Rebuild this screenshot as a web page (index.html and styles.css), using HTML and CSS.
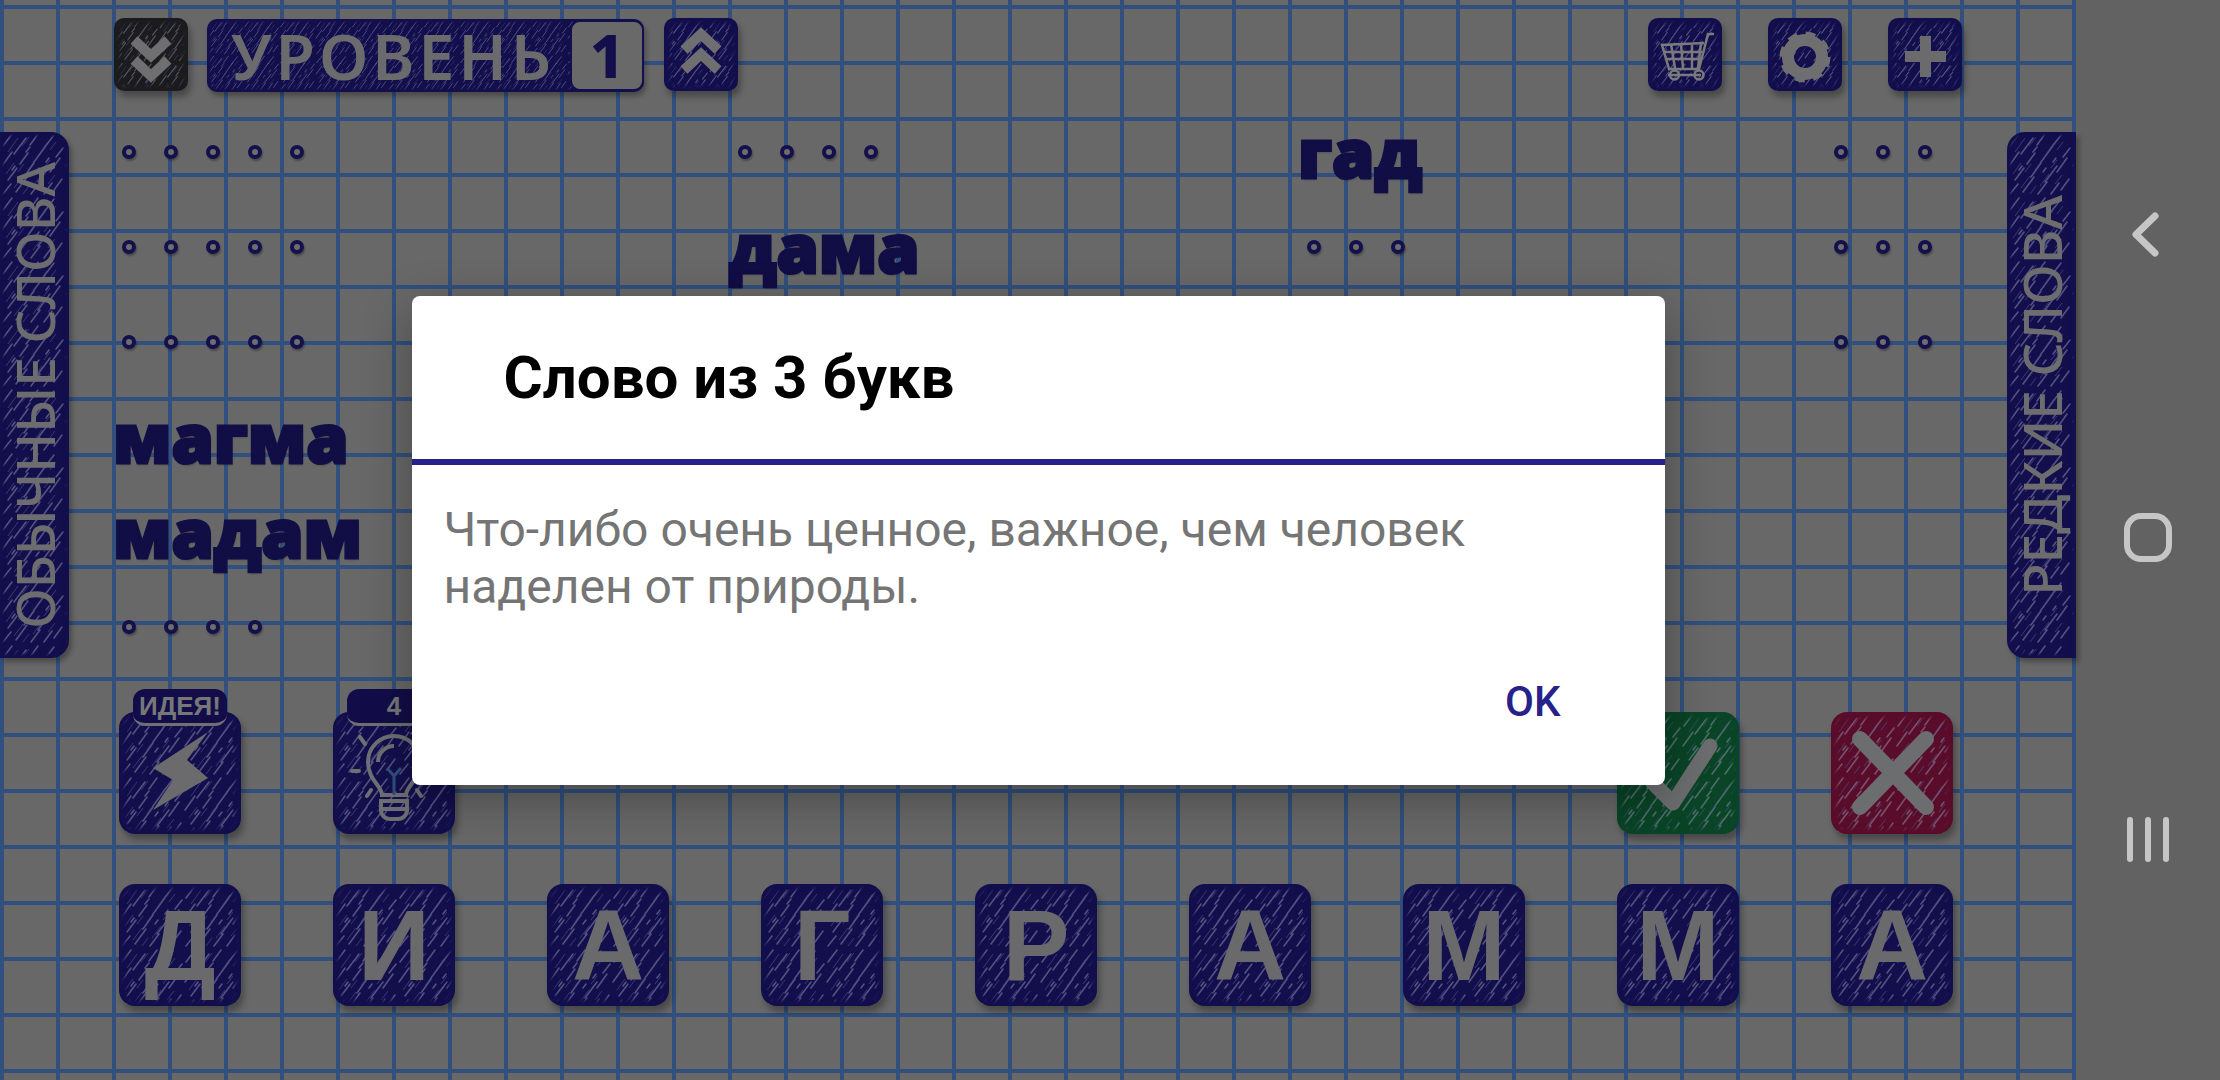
FILE: index.html
```html
<!DOCTYPE html>
<html lang="ru">
  <head>
    <meta charset="UTF-8" />
    <meta name="viewport" content="width=device-width, initial-scale=1.0" />
    <title>Слова из слова</title>
    <link rel="stylesheet" href="styles.css">
  </head>
  <body>
    <div class="screen">
      <div class="game">
        <div class="top-bar">
          <div class="tool-btn ink ink-black">
            <svg viewBox="0 0 74 73"><path class="glyph-line" d="M20 22l17 16 17-16M20 42l17 16 17-16" /></svg>
          </div>
          <div class="level ink">
            <span class="level-label">УРОВЕНЬ</span>
            <span class="level-num">1</span>
          </div>
          <div class="tool-btn ink">
            <svg viewBox="0 0 74 73"><path class="glyph-line" d="M20 32l17-16 17 16M20 52l17-16 17 16" /></svg>
          </div>
          <div class="top-right">
            <div class="tool-btn ink">
              <svg viewBox="0 0 74 73">
                <path class="cart" d="M66 16h-6l-9 35H21l-7-24 42-2M16 34h38M18 41h34M23 26l4 24M33 26l2 24M44 25v25M53 25l-3 25M20 57h33" />
                <circle class="cart" cx="26.5" cy="57" r="4.5" />
                <circle class="cart" cx="51" cy="57" r="4.5" />
              </svg>
            </div>
            <div class="tool-btn ink">
              <svg viewBox="0 0 74 73">
                <circle class="gear-body" cx="37" cy="39" r="17" />
                <circle class="gear-teeth" cx="37" cy="39" r="22" />
              </svg>
            </div>
            <div class="tool-btn ink">
              <svg viewBox="0 0 74 73"><path class="glyph-fill" d="M32 18h11v15h15v11H43v15H32V44H17V33h15z" /></svg>
            </div>
          </div>
        </div>

        <div class="board">
          <div class="side-tab side-left ink"><span>ОБЫЧНЫЕ СЛОВА</span></div>
          <div class="words">
            <div class="word-col">
              <div class="row"><i></i><i></i><i></i><i></i><i></i></div>
              <div class="row"><i></i><i></i><i></i><i></i><i></i></div>
              <div class="row"><i></i><i></i><i></i><i></i><i></i></div>
              <div class="row"><b>магма</b></div>
              <div class="row"><b>мадам</b></div>
              <div class="row"><i></i><i></i><i></i><i></i></div>
            </div>
            <div class="word-col">
              <div class="row"><i></i><i></i><i></i><i></i></div>
              <div class="row"><b>дама</b></div>
            </div>
            <div class="word-col">
              <div class="row"><b>гад</b></div>
              <div class="row"><i></i><i></i><i></i></div>
            </div>
            <div class="word-col">
              <div class="row"><i></i><i></i><i></i></div>
              <div class="row"><i></i><i></i><i></i></div>
              <div class="row"><i></i><i></i><i></i></div>
            </div>
          </div>
          <div class="side-tab side-right ink"><span>РЕДКИЕ СЛОВА</span></div>
        </div>

        <div class="keys">
          <div class="key ink">
            <span class="badge">ИДЕЯ!</span>
            <svg viewBox="0 0 122 122"><path class="glyph-fill" d="M89 20L68 48l21 18-55 32 20-30-20-12z" /></svg>
          </div>
          <div class="key ink">
            <span class="badge">4</span>
            <svg viewBox="0 0 122 122">
              <path class="bulb" d="M49 83c0-9-14-15-14-33a26 26 0 0 1 52 0c0 18-14 24-14 33zM48 89h26v9a9 9 0 0 1-9 9h-8a9 9 0 0 1-9-9zM48 97h26M45 50a16 16 0 0 1 16-16" />
              <path class="bulb-wire" d="M54 56l7 8 7-8M61 64v19" />
              <path class="bulb-ray" d="M27 25l5 7M19 59h7M96 59h7M34 84l4-6M88 84l-4-6" />
            </svg>
          </div>
          <div class="key-gap"></div>
          <div class="key-gap"></div>
          <div class="key-gap"></div>
          <div class="key-gap"></div>
          <div class="key-gap"></div>
          <div class="key ink ink-green">
            <svg viewBox="0 0 122 122"><path class="mark" d="M36 71l20 20 37-57" /></svg>
          </div>
          <div class="key ink ink-red">
            <svg viewBox="0 0 122 122"><path class="mark mark-x" d="M29 27l66 68M95 27L29 95" /></svg>
          </div>
        </div>

        <div class="keys letters">
          <div class="key ink">Д</div>
          <div class="key ink">И</div>
          <div class="key ink">А</div>
          <div class="key ink">Г</div>
          <div class="key ink">Р</div>
          <div class="key ink">А</div>
          <div class="key ink">М</div>
          <div class="key ink">М</div>
          <div class="key ink">А</div>
        </div>

        <div class="scrim">
          <div class="dialog">
            <div class="dialog-title">Слово из 3 букв</div>
            <div class="dialog-text">Что-либо очень ценное, важное, чем человек наделен от природы.</div>
            <div class="dialog-actions"><span>OK</span></div>
          </div>
        </div>
      </div>

      <div class="navbar">
        <svg class="nav-back" viewBox="0 0 27 45"><path d="M23 4L4 22.500 23 41" /></svg>
        <div class="nav-home"></div>
        <div class="nav-recent"><i></i><i></i><i></i></div>
      </div>
    </div>
  </body>
</html>
```

FILE: styles.css
```css
* {
  box-sizing: border-box;
}
body {
  margin: 0;
  overflow: hidden;
  background-color: #626262;
  font-family: "Liberation Sans", Arial, sans-serif;
}
.screen {
  display: flex;
  width: 2220px;
  height: 1080px;
}
.game {
  position: relative;
  width: 2076px;
  height: 1080px;
  background-color: #686868;
  background-image: linear-gradient(90deg, #31507d 4px, transparent 4px),
    linear-gradient(#31507d 4px, transparent 4px);
  background-size: 56px 56px;
  background-position: 0 5px;
}

/* scribbled ink used on every button */
.ink {
  --base: #130f4d;
  background-color: var(--base);
  background-image: url("data:image/svg+xml,%3Csvg xmlns='http://www.w3.org/2000/svg' width='64' height='64'%3E%3Cg stroke='rgb(150,152,180)' stroke-width='1.5' stroke-linecap='round' opacity='.5' fill='none'%3E%3Cpath d='M3 14l9-12M14 22l12-16M30 13l8-11M44 16l10-13M56 25l7-9M2 34l10-14M20 32l8-11M34 30l11-15M50 40l10-14M8 48l9-12M24 45l10-14M38 50l12-16M54 58l8-11M3 62l8-10M16 60l11-15M31 62l9-12M44 62l8-11M26 20l4-5M46 30l3-4M12 38l3-4M36 40l3-4'/%3E%3C/g%3E%3Cg stroke='rgb(70,75,130)' stroke-width='1' opacity='.7' fill='none'%3E%3Cpath d='M8 20l10-14M22 14l7-9M38 24l9-13M50 18l6-8M6 42l8-11M18 40l6-8M28 38l8-11M44 36l6-8M14 56l9-12M33 54l9-12M48 52l7-9M23 62l6-8'/%3E%3C/g%3E%3C/svg%3E");
  background-size: 64px 64px;
  box-shadow: inset 0 0 4px 6px var(--base), 3px 6px 6px rgba(0, 0, 0, 0.3);
}
.ink-black {
  --base: #1c1c1f;
}
.ink-green {
  --base: #0a4527;
}
.ink-red {
  --base: #5a0d2a;
}

.top-bar {
  display: flex;
  align-items: flex-start;
  padding: 18px 114px 0;
  height: 104px;
}
.top-right {
  display: flex;
  gap: 46px;
  margin-left: auto;
}
.tool-btn {
  flex: none;
  width: 74px;
  height: 73px;
  border-radius: 10px;
  background-size: 44px 44px;
}
.tool-btn svg {
  display: block;
  width: 100%;
  height: 100%;
}
.level {
  display: flex;
  align-items: center;
  justify-content: space-between;
  width: 437px;
  height: 73px;
  margin: 1px 20px 0 19px;
  padding-left: 24px;
  border-radius: 10px;
  background-size: 36px 36px;
  box-shadow: inset 0 0 2px 3px var(--base), 2px 4px 5px rgba(0, 0, 0, 0.3);
}
.level-label {
  font-family: "Noto Sans", sans-serif;
  font-size: 64px;
  font-weight: 600;
  letter-spacing: 4px;
  line-height: 73px;
  color: #6b6b6e;
}
.level-num {
  width: 74px;
  height: 71px;
  border: 2px solid #130f4d;
  border-radius: 10px;
  background-color: #696969;
  font-family: "Noto Sans", sans-serif;
  font-size: 60px;
  font-weight: 800;
  line-height: 67px;
  text-align: center;
  color: #130f4d;
}
.glyph-line {
  fill: none;
  stroke: #6f6f72;
  stroke-width: 10;
}
.glyph-fill {
  fill: #6b6b6e;
}
.cart {
  fill: none;
  stroke: #7a7a7c;
  stroke-width: 2.500;
}
.gear-body {
  fill: none;
  stroke: #6f6f72;
  stroke-width: 12;
}
.gear-teeth {
  fill: none;
  stroke: #6f6f72;
  stroke-width: 7;
  stroke-dasharray: 9.270 8;
}

.board {
  display: flex;
  height: 570px;
}
.side-tab {
  flex: none;
  display: flex;
  align-items: center;
  justify-content: center;
  width: 69px;
  height: 526px;
  margin-top: 28px;
  box-shadow: inset 0 0 3px 4px var(--base), 3px 4px 5px rgba(0, 0, 0, 0.3);
}
.side-tab span {
  writing-mode: vertical-rl;
  transform: rotate(180deg);
  font-family: "Noto Sans", sans-serif;
  font-size: 53px;
  font-weight: 500;
  line-height: 1;
  white-space: nowrap;
  color: #6d6d70;
}
.side-left {
  border-radius: 0 18px 18px 0;
}
.side-right {
  border-radius: 18px 0 0 18px;
}
.words {
  flex: 1;
  display: grid;
  grid-template-columns: 616px 569px 527px 1fr;
  padding-left: 53px;
}
.row {
  display: flex;
  align-items: center;
  gap: 28px;
  height: 95px;
}
.row i {
  width: 14px;
  height: 14px;
  border: 4.500px solid #14104c;
  border-radius: 50%;
  background-color: #6d6d6d;
  box-shadow: 1px 2px 2px rgba(0, 0, 0, 0.3);
}
.row b {
  margin-left: -9px;
  font-family: "Open Sans", sans-serif;
  font-size: 68px;
  font-weight: 800;
  line-height: 1;
  color: #110d45;
  -webkit-text-stroke: 3px #110d45;
  text-shadow: 1px 2px 2px rgba(0, 0, 0, 0.25);
}

.keys {
  display: grid;
  grid-template-columns: repeat(9, 122px);
  column-gap: 92px;
  margin: 38px 0 0 119px;
}
.key {
  position: relative;
  height: 122px;
  border-radius: 16px;
}
.key svg {
  display: block;
  width: 100%;
  height: 100%;
}
.letters {
  margin-top: 50px;
}
.letters .key {
  display: flex;
  align-items: center;
  justify-content: center;
  font-size: 100px;
  font-weight: 700;
  line-height: 1;
  color: #6a6a6c;
}
.badge {
  position: absolute;
  top: -23px;
  left: 14px;
  width: 94px;
  height: 37px;
  border-bottom: 3px solid #707074;
  border-radius: 12px;
  background-color: #120d48;
  font-size: 26px;
  font-weight: 700;
  line-height: 34px;
  text-align: center;
  color: #77777a;
}
.bulb {
  fill: none;
  stroke: #6f7073;
  stroke-width: 4;
}
.bulb-wire {
  fill: none;
  stroke: #31507d;
  stroke-width: 3;
}
.bulb-ray {
  fill: none;
  stroke: #6f7073;
  stroke-width: 4;
  stroke-linecap: round;
}
.mark {
  fill: none;
  stroke: #6c6d6e;
  stroke-width: 15;
  stroke-linejoin: round;
  stroke-linecap: round;
}
.mark-x {
  stroke-width: 16;
}

.scrim {
  position: absolute;
  inset: 0;
  display: flex;
  align-items: center;
  justify-content: center;
}
.dialog {
  width: 1253px;
  height: 489px;
  border-radius: 8px;
  background-color: #fff;
  box-shadow: 0 14px 50px rgba(0, 0, 0, 0.3);
}
.dialog-title {
  height: 169px;
  padding: 0 0 6px 92px;
  border-bottom: 6px solid #26228a;
  font-family: Roboto, sans-serif;
  font-size: 60px;
  font-weight: 700;
  line-height: 163px;
  color: #000;
}
.dialog-text {
  padding: 36px 100px 0 32px;
  font-family: Roboto, sans-serif;
  font-size: 48px;
  line-height: 57px;
  color: #757575;
}
.dialog-actions {
  display: flex;
  justify-content: flex-end;
  margin-top: 62px;
  padding-right: 104px;
  font-family: Roboto, sans-serif;
  font-size: 42px;
  font-weight: 500;
  line-height: 50px;
  color: #26228a;
}

.navbar {
  flex: 1;
  display: flex;
  flex-direction: column;
  justify-content: space-between;
  align-items: center;
  padding: 212px 0 218px;
}
.nav-back {
  width: 27px;
  height: 45px;
  margin-right: 5px;
}
.nav-back path {
  fill: none;
  stroke: #c6c6c6;
  stroke-width: 7;
  stroke-linecap: round;
  stroke-linejoin: round;
}
.nav-home {
  width: 48px;
  height: 49px;
  border: 6px solid #c6c6c6;
  border-radius: 17px;
  margin-right: 1px;
}
.nav-recent {
  display: flex;
  gap: 12.500px;
  height: 45px;
}
.nav-recent i {
  width: 5.500px;
  border-radius: 3px;
  background-color: #c6c6c6;
}
```
